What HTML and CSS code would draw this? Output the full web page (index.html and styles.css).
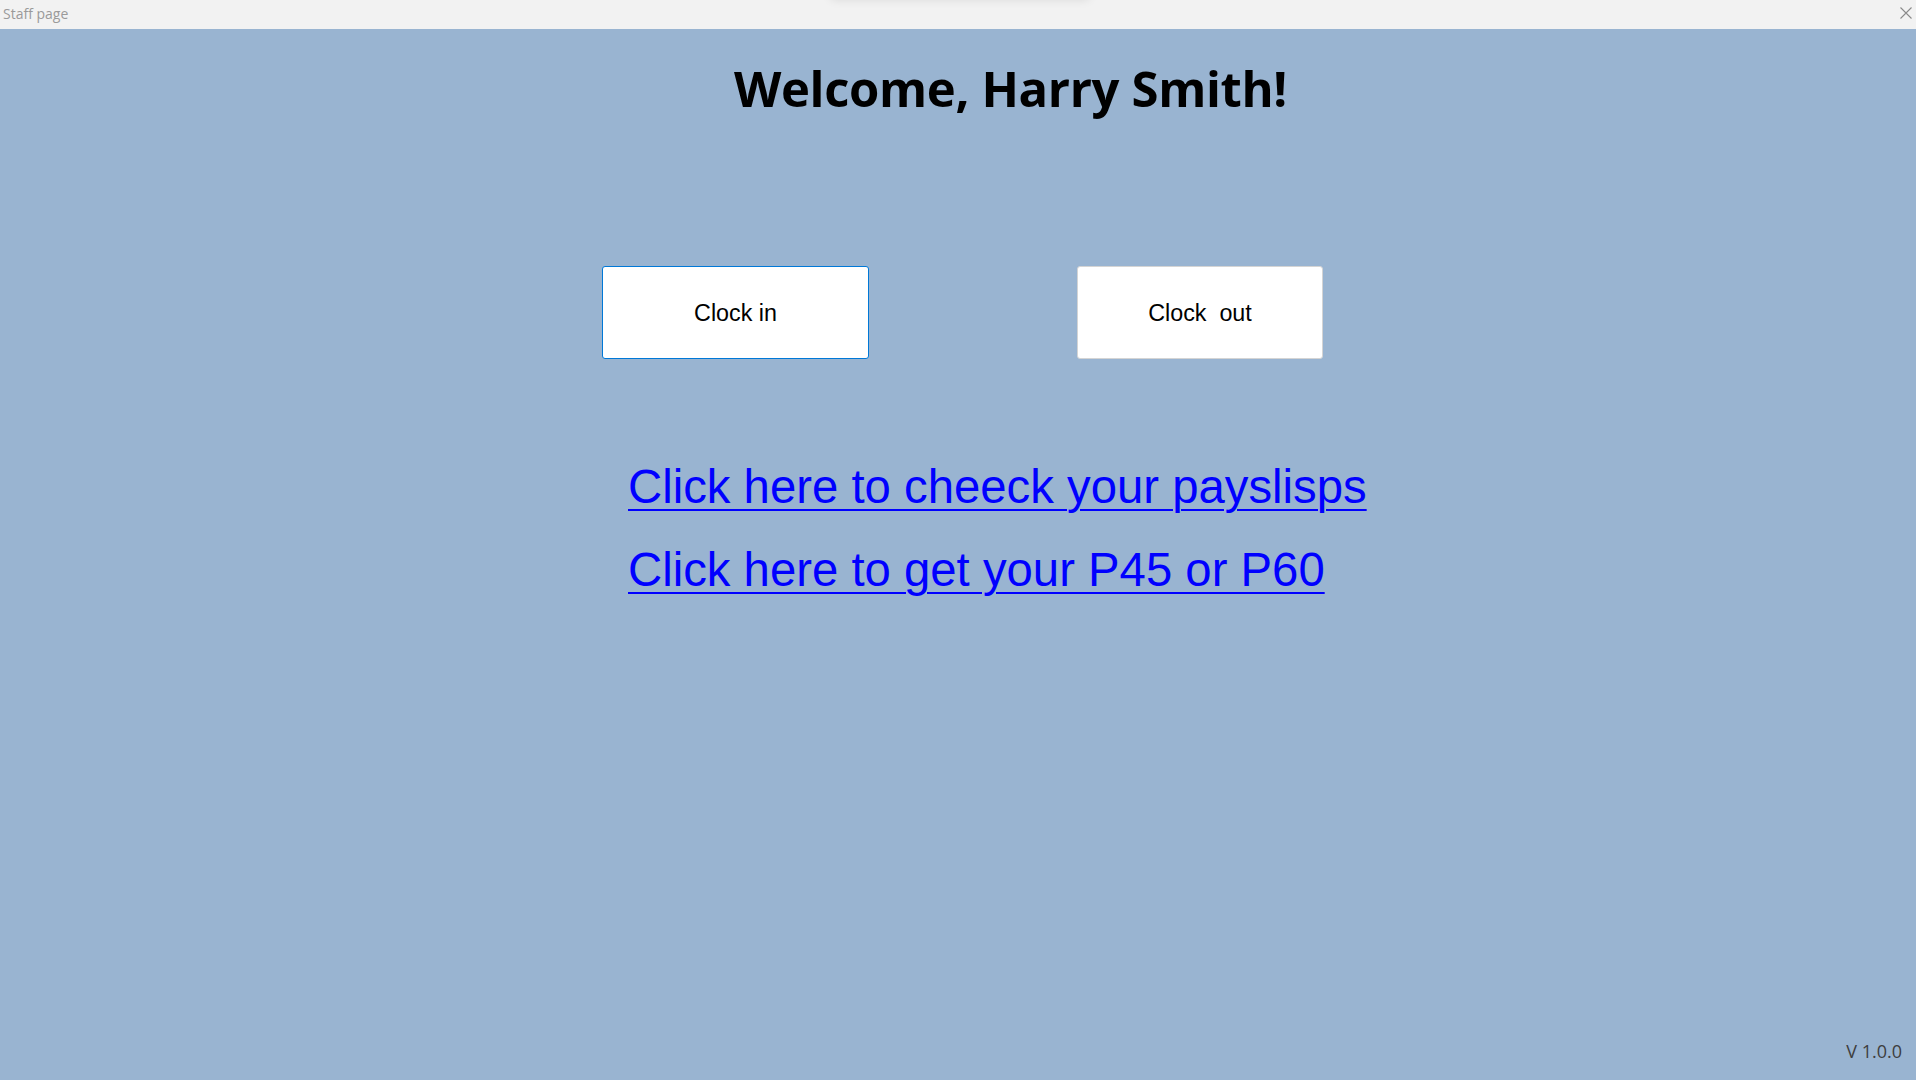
FILE: index.html
```html
<!DOCTYPE html>
<html lang="en">
<head>
<meta charset="utf-8">
<title>Staff page</title>
<link rel="stylesheet" href="styles.css">
</head>
<body>
<div class="window">
  <header class="titlebar">
    <span class="title-text">Staff page</span>
    <div class="top-shadow"></div>
    <button class="close" aria-label="Close">
      <svg width="12" height="12" viewBox="0 0 12 12"><path d="M0.5 0.5 L11.5 11.5 M11.5 0.5 L0.5 11.5" stroke="#8a8a8a" stroke-width="1.1" fill="none"/></svg>
    </button>
  </header>
  <main class="content">
    <h1 class="welcome">Welcome, Harry Smith!</h1>
    <div class="actions">
      <button class="btn btn-in">Clock in</button>
      <button class="btn btn-out">Clock  out</button>
    </div>
    <div class="links">
      <a class="link" href="#">Click here to cheeck your payslisps</a>
      <a class="link" href="#">Click here to get your P45 or P60</a>
    </div>
    <div class="version">V 1.0.0</div>
  </main>
</div>
</body>
</html>
```

FILE: styles.css
```css
html, body {
  margin: 0;
  padding: 0;
  width: 1916px;
  height: 1080px;
  overflow: hidden;
}

.window {
  display: flex;
  flex-direction: column;
  width: 1916px;
  height: 1080px;
}

.titlebar {
  position: relative;
  height: 29px;
  flex: 0 0 29px;
  background: #f2f2f2;
  display: flex;
  align-items: center;
  justify-content: space-between;
  padding: 0 4px 0 3px;
  box-sizing: border-box;
}

.title-text {
  font-family: "Open Sans", "Noto Sans", sans-serif;
  font-size: 14px;
  color: #9a9a9a;
  line-height: 29px;
  margin-top: -2px;
}

.top-shadow {
  position: absolute;
  left: 830px;
  top: -10px;
  width: 260px;
  height: 10px;
  box-shadow: 0 0 10px rgba(0, 0, 0, 0.10);
  border-radius: 6px;
}

.close {
  border: 0;
  background: transparent;
  padding: 0;
  width: 12px;
  height: 12px;
  margin-top: -4px;
  display: flex;
}

.content {
  flex: 1 1 auto;
  background: #99b4d1;
  display: flex;
  flex-direction: column;
  padding-left: 602px;
  padding-right: 14px;
  padding-bottom: 17px;
  box-sizing: border-box;
}

.welcome {
  margin: 34px 0 0 132px;
  font-family: "Open Sans", "Noto Sans", sans-serif;
  font-weight: 700;
  font-size: 49px;
  line-height: 50px;
  color: #000;
  letter-spacing: -0.35px;
}

.actions {
  display: flex;
  gap: 208px;
  margin-top: 153px;
}

.btn {
  height: 93px;
  background: #ffffff;
  border-radius: 3px;
  font-family: "Liberation Sans", Arial, sans-serif;
  font-size: 23.3px;
  color: #000;
  white-space: pre;
  padding: 2px 0 0 0;
  box-sizing: border-box;
}

.btn-in {
  width: 267px;
  border: 1px solid #0078d7;
}

.btn-out {
  width: 246px;
  border: 1px solid #d4d4d4;
}

.links {
  display: flex;
  flex-direction: column;
  align-items: flex-start;
  margin: 86px 0 0 26px;
}

.link {
  font-family: "Liberation Sans", Arial, sans-serif;
  font-size: 47.3px;
  line-height: 83px;
  color: #0000ff;
  text-decoration: underline;
  text-decoration-thickness: 2px;
  text-underline-offset: 6px;
}

.version {
  margin-top: auto;
  align-self: flex-end;
  font-family: "Open Sans", "Noto Sans", sans-serif;
  font-size: 18px;
  line-height: 24px;
  color: #3e3e3e;
}
```
